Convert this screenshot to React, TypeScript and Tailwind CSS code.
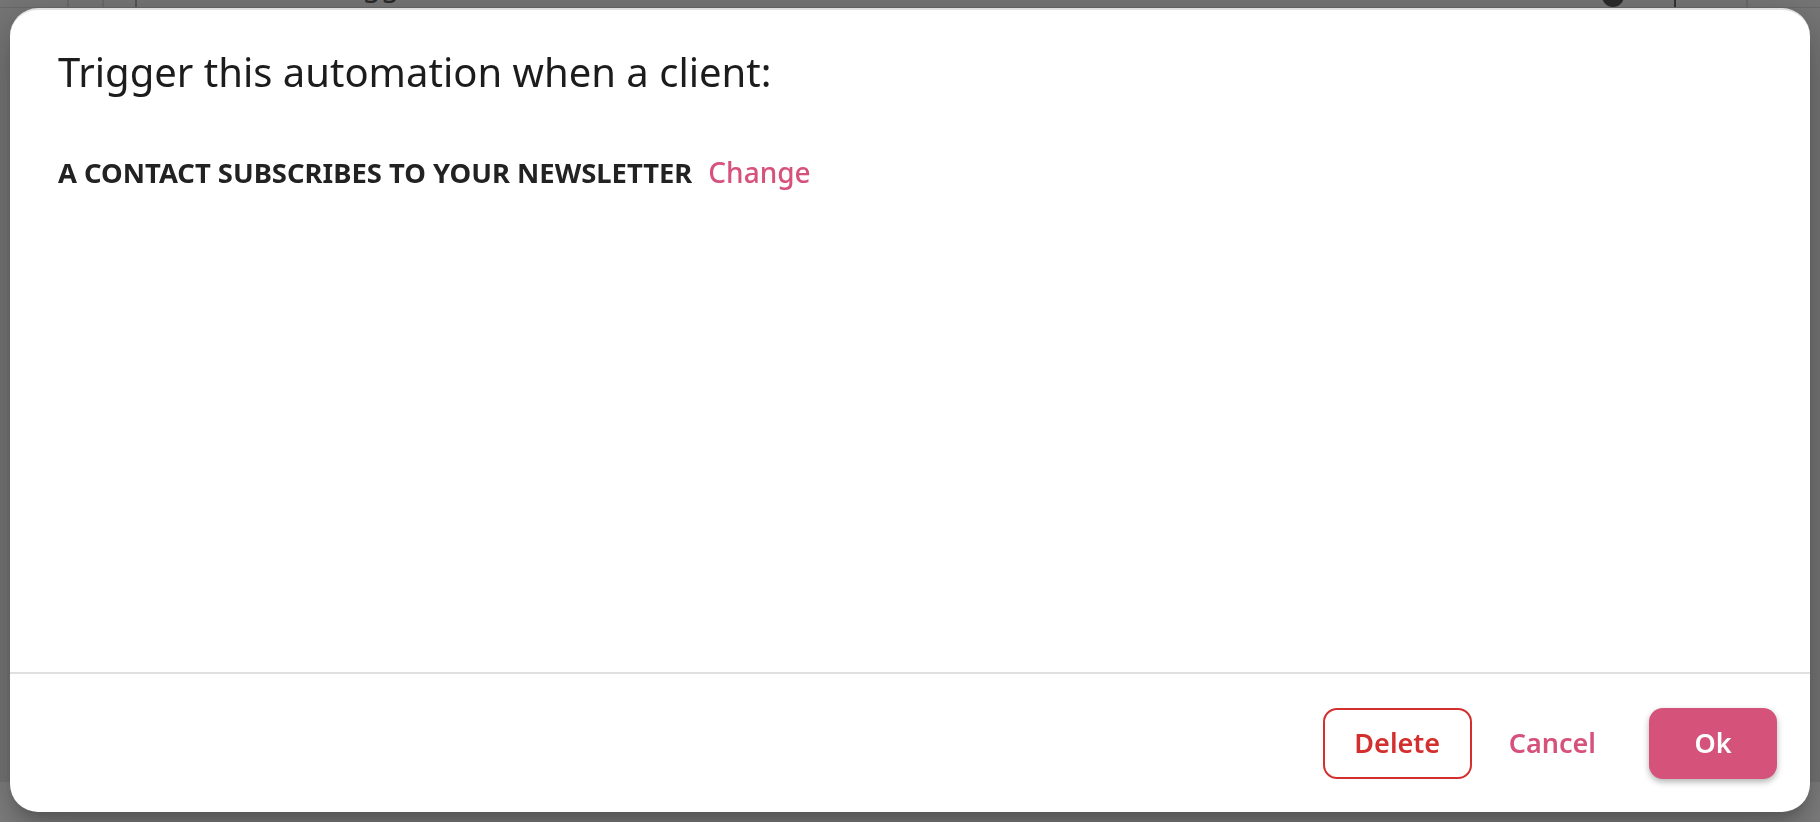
import React from "react";

const font = { fontFamily: '"Noto Sans", "Open Sans", sans-serif' };

function BackgroundPage() {
  return (
    <div className="h-full w-full bg-[#eaeaea]">
      <div className="-mt-[40px] flex h-[48px] items-end border-b border-[#d0d0d0] bg-[#eaeaea]">
        <div className="h-full w-[69px] border-r-2 border-[#d2d2d2]" />
        <div className="h-full w-[35px] border-r-2 border-[#d2d2d2]" />
        <div className="h-full w-[33px] border-r-2 border-[#a8a8a8]" />
        <div className="flex h-full flex-1 items-end pl-[190px] text-[30px] leading-[44px] text-[#555]">
          Trigger
        </div>
        <div className="mr-[50px] h-[22px] w-[22px] self-end rounded-full bg-[#555]" />
        <div className="h-full w-[72px] border-l-2 border-[#666]" />
        <div className="h-full w-[74px] border-l-2 border-[#d2d2d2]" />
      </div>
    </div>
  );
}

export default function App() {
  return (
    <div className="relative h-screen w-full overflow-hidden" style={font}>
      <BackgroundPage />

      {/* modal overlay */}
      <div className="fixed inset-0 flex bg-black/50 pt-[8px] pb-[10px] px-[10px]">
        <div className="flex flex-1 flex-col overflow-hidden rounded-[28px] border-t-2 border-[#e0e0e0] bg-white shadow-[0_11px_15px_-7px_rgba(0,0,0,0.2),0_24px_38px_3px_rgba(0,0,0,0.14),0_9px_46px_8px_rgba(0,0,0,0.12)]">
          <div className="flex-1 px-12 pt-[38px]">
            <h2 className="text-[40px] leading-[48px] font-normal text-[#1c1c1c]">
              Trigger this automation when a client:
            </h2>
            <div className="mt-[58px] flex items-baseline gap-[16px] text-[28px] leading-[36px]">
              <span className="text-[27.4px] font-bold text-[#222]">
                A CONTACT SUBSCRIBES TO YOUR NEWSLETTER
              </span>
              <button className="font-medium text-[#d6517b]">Change</button>
            </div>
          </div>

          <div className="flex h-[140px] items-center justify-end border-t-2 border-[#e0e0e0] pr-[33px]">
            <button className="h-[71px] w-[149px] rounded-[14px] border-2 border-[#d32f2f] text-[27px] font-semibold text-[#d32f2f]">
              Delete
            </button>
            <button className="ml-[37px] mr-[53px] text-[27px] font-semibold text-[#d6517b]">
              Cancel
            </button>
            <button className="h-[71px] w-[128px] rounded-[14px] bg-[#d5527a] text-[27px] font-semibold text-white shadow-[0_3px_6px_rgba(0,0,0,0.3)]">
              Ok
            </button>
          </div>
        </div>
      </div>
    </div>
  );
}
